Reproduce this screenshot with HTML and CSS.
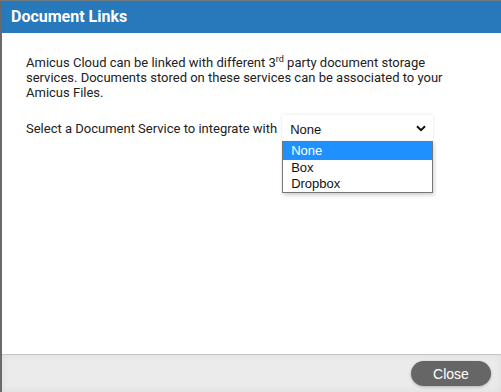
FILE: index.html
```html
<!DOCTYPE html>
<html>
<head>
<meta charset="utf-8">
<link rel="stylesheet" href="styles.css">
</head>
<body>
<div class="page">
  <div class="backdrop"></div>
  <div class="dialog">
    <div class="header">Document Links</div>
    <div class="content">
      <p class="intro">Amicus Cloud can be linked with different 3<sup>rd</sup> party document storage services. Documents stored on these services can be associated to your Amicus Files.</p>
      <div class="row">
        <span class="label">Select a Document Service to integrate with</span>
        <div class="select">
          <span class="value">None</span>
          <svg class="chev" width="10" height="7" viewBox="0 0 10 7"><path d="M1 1.2 L5 5.2 L9 1.2" fill="none" stroke="#111" stroke-width="2"/></svg>
          <ul class="options">
            <li class="sel">None</li>
            <li>Box</li>
            <li>Dropbox</li>
          </ul>
        </div>
      </div>
    </div>
    <div class="footer">
      <button class="close">Close</button>
    </div>
  </div>
</div>
</body>
</html>
```
FILE: styles.css
```css
html, body {
  margin: 0;
  padding: 0;
}
body {
  width: 501px;
  height: 392px;
  overflow: hidden;
  background: #5d6a70;
}
.page {
  display: flex;
  flex-direction: column;
  height: 392px;
}
.backdrop {
  height: 1px;
  background: #6f7b80;
}
.dialog {
  flex: 1;
  display: flex;
  flex-direction: column;
  background: #fff;
  border-left: 2px solid #6a6a6a;
}
.header {
  height: 32px;
  background: #2878bc;
  color: #fff;
  font-family: Roboto, "Liberation Sans", sans-serif;
  font-weight: bold;
  font-size: 16px;
  line-height: 32px;
  padding-left: 10px;
  margin-left: -1px;
}
.content {
  flex: 1;
  padding: 22px 24px 0 24px;
  font-family: Roboto, "Liberation Sans", sans-serif;
  font-size: 13px;
  color: #222;
}
.intro {
  margin: 0;
  line-height: 15px;
}
.intro sup {
  font-size: 9px;
  line-height: 0;
  vertical-align: 5px;
}
.row {
  display: flex;
  align-items: center;
  margin-top: 15px;
  gap: 5px;
}
.label {
  line-height: 15px;
  padding-top: 1px;
}
.select {
  position: relative;
  width: 151px;
  height: 26px;
  box-sizing: border-box;
  display: flex;
  align-items: center;
  justify-content: space-between;
  padding: 0 7px 0 8px;
  background: #fff;
  box-shadow: 0 0 3px rgba(0,0,0,0.12);
  font-family: "Liberation Sans", Arial, sans-serif;
  font-size: 13px;
  color: #111;
}
.value {
  padding-top: 2px;
}
.chev {
  margin-top: 1px;
}
.options {
  position: absolute;
  left: 0;
  top: 26px;
  width: 151px;
  box-sizing: border-box;
  margin: 0;
  padding: 0;
  list-style: none;
  border: 1px solid #767676;
  background: #fff;
  box-shadow: 1px 2px 4px rgba(0,0,0,0.2);
}
.options li {
  height: 16px;
  line-height: 16px;
  padding-left: 8px;
  color: #111;
}
.options li.sel {
  height: 18px;
  line-height: 18px;
  background: #1e90ff;
  color: #fff;
}
.footer {
  height: 37px;
  border-top: 1px solid #c4c4c4;
  background: #ebebeb;
  box-shadow: inset 0 0 8px rgba(0,0,0,0.06);
  display: flex;
  align-items: center;
  justify-content: flex-end;
  padding-right: 10px;
}
.close {
  width: 80px;
  height: 25px;
  border: none;
  border-radius: 13px;
  background: #666;
  color: #fff;
  font-family: "Liberation Sans", Arial, sans-serif;
  font-size: 14px;
  box-shadow: 0 1px 3px rgba(0,0,0,0.25);
  padding: 0;
}
```
